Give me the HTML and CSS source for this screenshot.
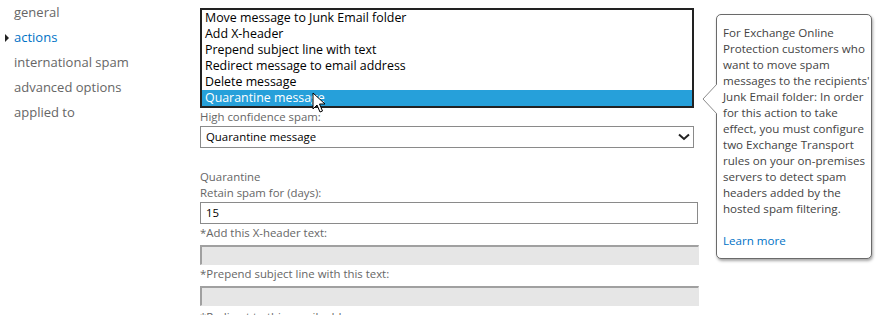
FILE: index.html
```html
<!DOCTYPE html>
<html lang="en">
<head>
    <meta charset="UTF-8">
    <title>spam filter policy - actions</title>
    <link rel="stylesheet" href="styles.css">
</head>
<body>
    <div class="page">
        <!-- Left navigation -->
        <ul class="nav">
            <li>general</li>
            <li class="active">actions</li>
            <li>international spam</li>
            <li>advanced options</li>
            <li>applied to</li>
        </ul>

        <div class="form">
            <!-- Open dropdown for spam action -->
            <ul class="listbox">
                <li>Move message to Junk Email folder</li>
                <li>Add X-header</li>
                <li>Prepend subject line with text</li>
                <li>Redirect message to email address</li>
                <li>Delete message</li>
                <li class="selected">Quarantine message</li>
            </ul>

            <div class="label">High confidence spam:</div>
            <div class="select">
                <span>Quarantine message</span>
                <svg class="chevron" width="12" height="8" viewBox="0 0 12 8">
                    <polyline points="1,1.5 6,6 11,1.5" fill="none" stroke="#222" stroke-width="2"/>
                </svg>
            </div>

            <div class="label section">Quarantine</div>
            <div class="label tight">Retain spam for (days):</div>
            <div class="input">15</div>

            <div class="label">*Add this X-header text:</div>
            <div class="input disabled"></div>

            <div class="label">*Prepend subject line with this text:</div>
            <div class="input disabled"></div>

            <div class="label last">*Redirect to this email address:</div>
        </div>

        <!-- Help callout -->
        <div class="callout">
            <svg class="callout-arrow" width="15" height="32" viewBox="0 0 15 32">
                <polygon points="15,1 1,16 15,31" fill="#fff"/>
                <polyline points="15,1 1,16 15,31" fill="none" stroke="#8a8a8a" stroke-width="1"/>
            </svg>
            <p>For Exchange Online<br>
            Protection customers who<br>
            want to move spam<br>
            messages to the recipients'<br>
            Junk Email folder: In order<br>
            for this action to take<br>
            effect, you must configure<br>
            two Exchange Transport<br>
            rules on your on-premises<br>
            servers to detect spam<br>
            headers added by the<br>
            hosted spam filtering.</p>
            <a href="#">Learn more</a>
        </div>

        <!-- Mouse pointer over the selected item -->
        <svg class="cursor" width="14" height="22" viewBox="0 0 14 22">
            <path d="M1,1 L1,17 L5,13 L8,20 L10.5,19 L7.5,12 L13,12 Z" fill="#fff" stroke="#000" stroke-width="1" stroke-linejoin="round"/>
        </svg>
    </div>
</body>
</html>
```

FILE: styles.css
```css
body {
    margin: 0;
    background: #fff;
    font-family: "Segoe UI", "Open Sans", sans-serif;
}
.page {
    position: relative;
    display: flex;
    width: 876px;
    height: 315px;
    overflow: hidden;
}
.nav {
    list-style: none;
    margin: 0;
    padding: 0 0 0 14px;
    width: 186px;
    font-size: 13px;
    line-height: 25px;
    color: #666;
}
.nav li {
    position: relative;
}
.nav .active {
    color: #0072c6;
}
.nav .active::before {
    content: "";
    position: absolute;
    left: -9px;
    top: 9px;
    border-left: 4px solid #222;
    border-top: 4px solid transparent;
    border-bottom: 4px solid transparent;
}
.form {
    width: 498px;
    padding-top: 8px;
    font-size: 11.4px;
    line-height: 16px;
}
.listbox {
    list-style: none;
    margin: 0;
    padding: 0;
    width: 490px;
    border: 2px solid #222;
    color: #000;
    font-size: 12.4px;
}
.listbox li {
    padding-left: 3px;
    height: 16px;
}
.listbox .selected {
    background: #26a0da;
    color: #fff;
}
.label {
    color: #666;
    margin-top: 1px;
    white-space: nowrap;
}
.label.section {
    margin-top: 21px;
}
.label.tight {
    margin-top: 0;
}
.label.last {
    margin-top: 3px;
}
.select {
    display: flex;
    align-items: center;
    justify-content: space-between;
    width: 484px;
    height: 20px;
    margin-top: 1px;
    padding: 0 3px 0 5px;
    border: 1px solid #8a8a8a;
    color: #000;
}
.chevron {
    display: block;
}
.input {
    width: 486px;
    height: 20px;
    margin-top: 1px;
    padding: 0 5px;
    line-height: 20px;
    border: 1px solid #8a8a8a;
    color: #000;
}
.input.disabled {
    height: 17px;
    margin-top: 4px;
    background: #e6e6e6;
    border-color: #a0a0a0 #e6e6e6 #e6e6e6 #a0a0a0;
    border-width: 2px 1px 1px 2px;
}
.callout {
    position: absolute;
    left: 716px;
    top: 14px;
    width: 146px;
    height: 224px;
    padding: 10px 2px 9px 6px;
    border: 1px solid #6a6a6a;
    border-radius: 5px;
    background: #fff;
    box-shadow: 1px 2px 3px rgba(0, 0, 0, 0.35);
    font-size: 11.6px;
    line-height: 16px;
    color: #444;
    white-space: nowrap;
}
.callout p {
    margin: 0 0 16px 0;
}
.callout a {
    color: #0072c6;
    text-decoration: none;
}
.callout-arrow {
    position: absolute;
    left: -15px;
    top: 68px;
}
.cursor {
    position: absolute;
    left: 312px;
    top: 92px;
}
```
